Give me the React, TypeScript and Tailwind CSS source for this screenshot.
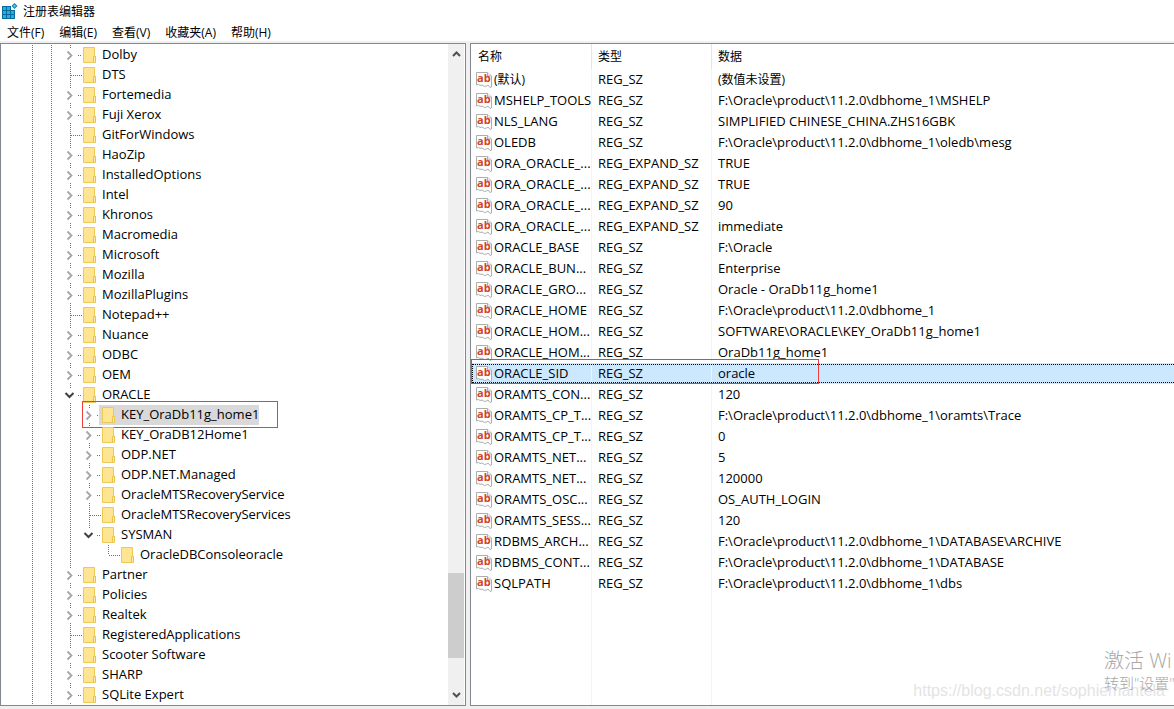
import clsx from 'clsx'

type TreeNode = {
  name: string
  level: number
  state?: 'closed' | 'open'
  last?: boolean
}

const tree: TreeNode[] = [
  { name: 'Dolby', level: 1, state: 'closed' },
  { name: 'DTS', level: 1 },
  { name: 'Fortemedia', level: 1, state: 'closed' },
  { name: 'Fuji Xerox', level: 1, state: 'closed' },
  { name: 'GitForWindows', level: 1 },
  { name: 'HaoZip', level: 1, state: 'closed' },
  { name: 'InstalledOptions', level: 1, state: 'closed' },
  { name: 'Intel', level: 1, state: 'closed' },
  { name: 'Khronos', level: 1, state: 'closed' },
  { name: 'Macromedia', level: 1, state: 'closed' },
  { name: 'Microsoft', level: 1, state: 'closed' },
  { name: 'Mozilla', level: 1, state: 'closed' },
  { name: 'MozillaPlugins', level: 1, state: 'closed' },
  { name: 'Notepad++', level: 1 },
  { name: 'Nuance', level: 1, state: 'closed' },
  { name: 'ODBC', level: 1, state: 'closed' },
  { name: 'OEM', level: 1, state: 'closed' },
  { name: 'ORACLE', level: 1, state: 'open' },
  { name: 'KEY_OraDb11g_home1', level: 2, state: 'closed' },
  { name: 'KEY_OraDB12Home1', level: 2, state: 'closed' },
  { name: 'ODP.NET', level: 2, state: 'closed' },
  { name: 'ODP.NET.Managed', level: 2, state: 'closed' },
  { name: 'OracleMTSRecoveryService', level: 2, state: 'closed' },
  { name: 'OracleMTSRecoveryServices', level: 2 },
  { name: 'SYSMAN', level: 2, state: 'open', last: true },
  { name: 'OracleDBConsoleoracle', level: 3, last: true },
  { name: 'Partner', level: 1, state: 'closed' },
  { name: 'Policies', level: 1, state: 'closed' },
  { name: 'Realtek', level: 1, state: 'closed' },
  { name: 'RegisteredApplications', level: 1 },
  { name: 'Scooter Software', level: 1, state: 'closed' },
  { name: 'SHARP', level: 1, state: 'closed' },
  { name: 'SQLite Expert', level: 1, state: 'closed' },
]

const values = [
  ['(默认)', 'REG_SZ', '(数值未设置)'],
  ['MSHELP_TOOLS', 'REG_SZ', 'F:\\Oracle\\product\\11.2.0\\dbhome_1\\MSHELP'],
  ['NLS_LANG', 'REG_SZ', 'SIMPLIFIED CHINESE_CHINA.ZHS16GBK'],
  ['OLEDB', 'REG_SZ', 'F:\\Oracle\\product\\11.2.0\\dbhome_1\\oledb\\mesg'],
  ['ORA_ORACLE_...', 'REG_EXPAND_SZ', 'TRUE'],
  ['ORA_ORACLE_...', 'REG_EXPAND_SZ', 'TRUE'],
  ['ORA_ORACLE_...', 'REG_EXPAND_SZ', '90'],
  ['ORA_ORACLE_...', 'REG_EXPAND_SZ', 'immediate'],
  ['ORACLE_BASE', 'REG_SZ', 'F:\\Oracle'],
  ['ORACLE_BUN...', 'REG_SZ', 'Enterprise'],
  ['ORACLE_GRO...', 'REG_SZ', 'Oracle - OraDb11g_home1'],
  ['ORACLE_HOME', 'REG_SZ', 'F:\\Oracle\\product\\11.2.0\\dbhome_1'],
  ['ORACLE_HOM...', 'REG_SZ', 'SOFTWARE\\ORACLE\\KEY_OraDb11g_home1'],
  ['ORACLE_HOM...', 'REG_SZ', 'OraDb11g_home1'],
  ['ORACLE_SID', 'REG_SZ', 'oracle'],
  ['ORAMTS_CON...', 'REG_SZ', '120'],
  ['ORAMTS_CP_T...', 'REG_SZ', 'F:\\Oracle\\product\\11.2.0\\dbhome_1\\oramts\\Trace'],
  ['ORAMTS_CP_T...', 'REG_SZ', '0'],
  ['ORAMTS_NET...', 'REG_SZ', '5'],
  ['ORAMTS_NET...', 'REG_SZ', '120000'],
  ['ORAMTS_OSC...', 'REG_SZ', 'OS_AUTH_LOGIN'],
  ['ORAMTS_SESS...', 'REG_SZ', '120'],
  ['RDBMS_ARCH...', 'REG_SZ', 'F:\\Oracle\\product\\11.2.0\\dbhome_1\\DATABASE\\ARCHIVE'],
  ['RDBMS_CONT...', 'REG_SZ', 'F:\\Oracle\\product\\11.2.0\\dbhome_1\\DATABASE'],
  ['SQLPATH', 'REG_SZ', 'F:\\Oracle\\product\\11.2.0\\dbhome_1\\dbs'],
]

const menus = ['文件(F)', '编辑(E)', '查看(V)', '收藏夹(A)', '帮助(H)']

function AppIcon() {
  return (
    <svg width="16" height="17" viewBox="0 0 16 17" className="shrink-0">
      <path d="M0 3h9v4h4v9H0z" fill="#0a6a9c" />
      <path d="M1 4h3v3H1zM5 4h3v3H5zM1 8h3v3H1zM5 8h3v3H5zM9 8h3v3H9zM1 12h3v3H1zM5 12h3v3H5zM9 12h3v3H9z" fill="#22aee4" />
      <path d="M12.500 0l3 3-3 3-3-3z" fill="#1583b8" />
      <path d="M12.500 1.500l1.500 1.500-1.500 1.500-1.500-1.500z" fill="#56cbf2" />
    </svg>
  )
}

function FolderIcon() {
  return (
    <svg width="13" height="16" viewBox="0 0 13 16" className="shrink-0">
      <path d="M.5.500h11v9h1v6H.5z" fill="#ffe591" stroke="#ecc956" />
      <path d="M10.500 15V9.500h2V15" fill="#ffeeb5" stroke="#e9c24b" />
    </svg>
  )
}

// String value icon: torn sheet with red "ab"
function StringIcon() {
  return (
    <svg width="16" height="16" viewBox="0 0 16 16" className="shrink-0 overflow-visible">
      <path d="M.5.500h11l4 3.500v11l-1.500.5-2-2.500-1.500 1-2 .5-2.500-1.500-2 .5-1.500-1-2 .5z" fill="#fff" stroke="#adadad" />
      <path d="M11.500.500V4h4" fill="#eee" stroke="#adadad" />
      <text x="1" y="10" fontSize="11" fontWeight="700" fill="#d1441f" fontFamily="'Open Sans', sans-serif">ab</text>
    </svg>
  )
}

// One 19px step of the tree: guide line, connector and expander arrow
function Guide({ node, own, blank }: { node?: TreeNode; own?: boolean; blank?: boolean }) {
  const state = own ? node?.state : undefined
  const bottom = own && node?.last ? 10 : 20
  return (
    <svg width="19" height="20" viewBox="0 0 19 20" className="shrink-0 overflow-visible">
      {!blank && (
        <g stroke="#707070" strokeDasharray="1 1" shapeRendering="crispEdges">
          {state ? (
            <>
              <path d="M9.500 0v3" />
              {!node?.last && <path d="M9.500 18v2" />}
            </>
          ) : (
            <path d={`M9.500 0V${bottom}`} />
          )}
          {own && <path d={state ? 'M17 10.500h4' : 'M10 10.500h11'} />}
        </g>
      )}
      {state === 'closed' && <path d="M6.500 6.500l4 4-4 4" fill="none" stroke="#a6a6a6" strokeWidth="1.800" />}
      {state === 'open' && <path d="M4.500 8l4 4 4-4" fill="none" stroke="#404040" strokeWidth="2" />}
    </svg>
  )
}

function TreeRow({ node }: { node: TreeNode }) {
  const selected = node.name === 'KEY_OraDb11g_home1'
  return (
    <li className="relative flex h-5">
      <Guide />
      <Guide />
      {node.level > 1 && <Guide />}
      {node.level > 2 && <Guide blank />}
      <Guide node={node} own />
      <button
        type="button"
        className={clsx('flex h-5 items-center gap-[6px] whitespace-nowrap pl-[3px]', selected && 'bg-[#d9d9d9]')}
      >
        <FolderIcon />
        <span className="self-start leading-[18px]">{node.name}</span>
      </button>
      {selected && <span className="pointer-events-none absolute -top-1 left-[59px] h-[27px] w-[196px] border border-[#f03c3c]" />}
    </li>
  )
}

function ScrollBar() {
  return (
    <div className="mr-px flex w-4 shrink-0 flex-col bg-[#f0f0f0]">
      <button type="button" aria-label="向上滚动" className="flex h-5 items-center justify-center">
        <svg width="9" height="6" viewBox="0 0 9 6"><path d="M1 5l3.500-3.500L8 5" fill="none" stroke="#505050" strokeWidth="2" /></svg>
      </button>
      <div className="grow-[510]" />
      <div className="grow-[85] bg-[#cdcdcd]" />
      <div className="grow-[27]" />
      <button type="button" aria-label="向下滚动" className="flex h-5 items-center justify-center">
        <svg width="9" height="6" viewBox="0 0 9 6"><path d="M1 1l3.500 3.500L8 1" fill="none" stroke="#505050" strokeWidth="2" /></svg>
      </button>
    </div>
  )
}

export default function App() {
  return (
    <div className="relative flex h-screen flex-col overflow-hidden bg-white font-['Open_Sans','Noto_Sans_CJK_SC',sans-serif] text-[13px] leading-5 text-black">
      <header className="flex h-[23px] shrink-0 items-center gap-[5px] pl-[2px] text-xs">
        <AppIcon />
        <h1>注册表编辑器</h1>
      </header>
      <nav className="flex h-[18px] shrink-0 items-center gap-[15px] pl-[7px] pt-[2px] text-xs">
        {menus.map((m) => (
          <button key={m} type="button" className="whitespace-nowrap">{m}</button>
        ))}
      </nav>

      <main className="flex min-h-0 grow gap-1 bg-[#f0f0f0] pb-[3px] pt-[2px]">
        <section className="flex w-[466px] shrink-0 border border-[#828790] bg-white">
          <ul className="min-w-0 grow overflow-hidden pl-[22px] pt-px">
            {tree.map((node) => (
              <TreeRow key={node.name} node={node} />
            ))}
          </ul>
          <ScrollBar />
        </section>

        <section className="min-w-0 grow overflow-hidden border border-r-0 border-[#828790] bg-white">
          <table className="h-full w-full table-fixed border-separate border-spacing-0 whitespace-nowrap text-left">
            <thead>
              <tr className="h-[25px] text-xs">
                <th className="w-[121px] border-r border-[#e5e5e5] pl-[7px] font-normal">名称</th>
                <th className="w-[120px] border-r border-[#e5e5e5] pl-[6px] font-normal">类型</th>
                <th className="pl-[6px] font-normal">数据</th>
              </tr>
            </thead>
            <tbody>
              {values.map(([name, type, data], i) => {
                const selected = name === 'ORACLE_SID'
                return (
                  <tr key={i} className={clsx('h-[21px] align-top leading-[21px]', selected && 'bg-[#cce8ff]')}>
                    <td className="relative border-r border-[#edf4fb] p-0 pl-[5px]">
                      <span className="flex h-[21px] items-center gap-[2px]">
                        <StringIcon />
                        <span className={clsx(i === 0 && 'text-xs leading-[21px]')}>{name}</span>
                      </span>
                      {selected && (
                        <>
                          <span className="pointer-events-none absolute left-px top-px h-[19px] w-screen border border-dotted border-black" />
                          <span className="pointer-events-none absolute -top-1 left-0 h-[25px] w-[348px] border border-[#f03c3c]" />
                        </>
                      )}
                    </td>
                    <td className="border-r border-[#edf4fb] p-0 pl-[6px]">{type}</td>
                    <td className={clsx('p-0 pl-[6px]', i === 0 && 'text-xs leading-[21px]')}>{data}</td>
                  </tr>
                )
              })}
              <tr>
                <td className="border-r border-[#edf4fb]" />
                <td className="border-r border-[#edf4fb]" />
                <td />
              </tr>
            </tbody>
          </table>
        </section>
      </main>

      <div className="pointer-events-none absolute bottom-[6px] right-[9px] whitespace-nowrap font-['Liberation_Sans',sans-serif] text-base text-[#e4e4e4]">
        https://blog.csdn.net/sophiemantela
      </div>
      <div className="pointer-events-none absolute bottom-[17px] right-0 w-[70px] overflow-hidden whitespace-nowrap font-light text-[#a8a8a8]">
        <p className="text-xl leading-[26px]">激活 Wi</p>
        <p className="text-[15px] leading-[18px]">转到"设置"</p>
      </div>
    </div>
  )
}
